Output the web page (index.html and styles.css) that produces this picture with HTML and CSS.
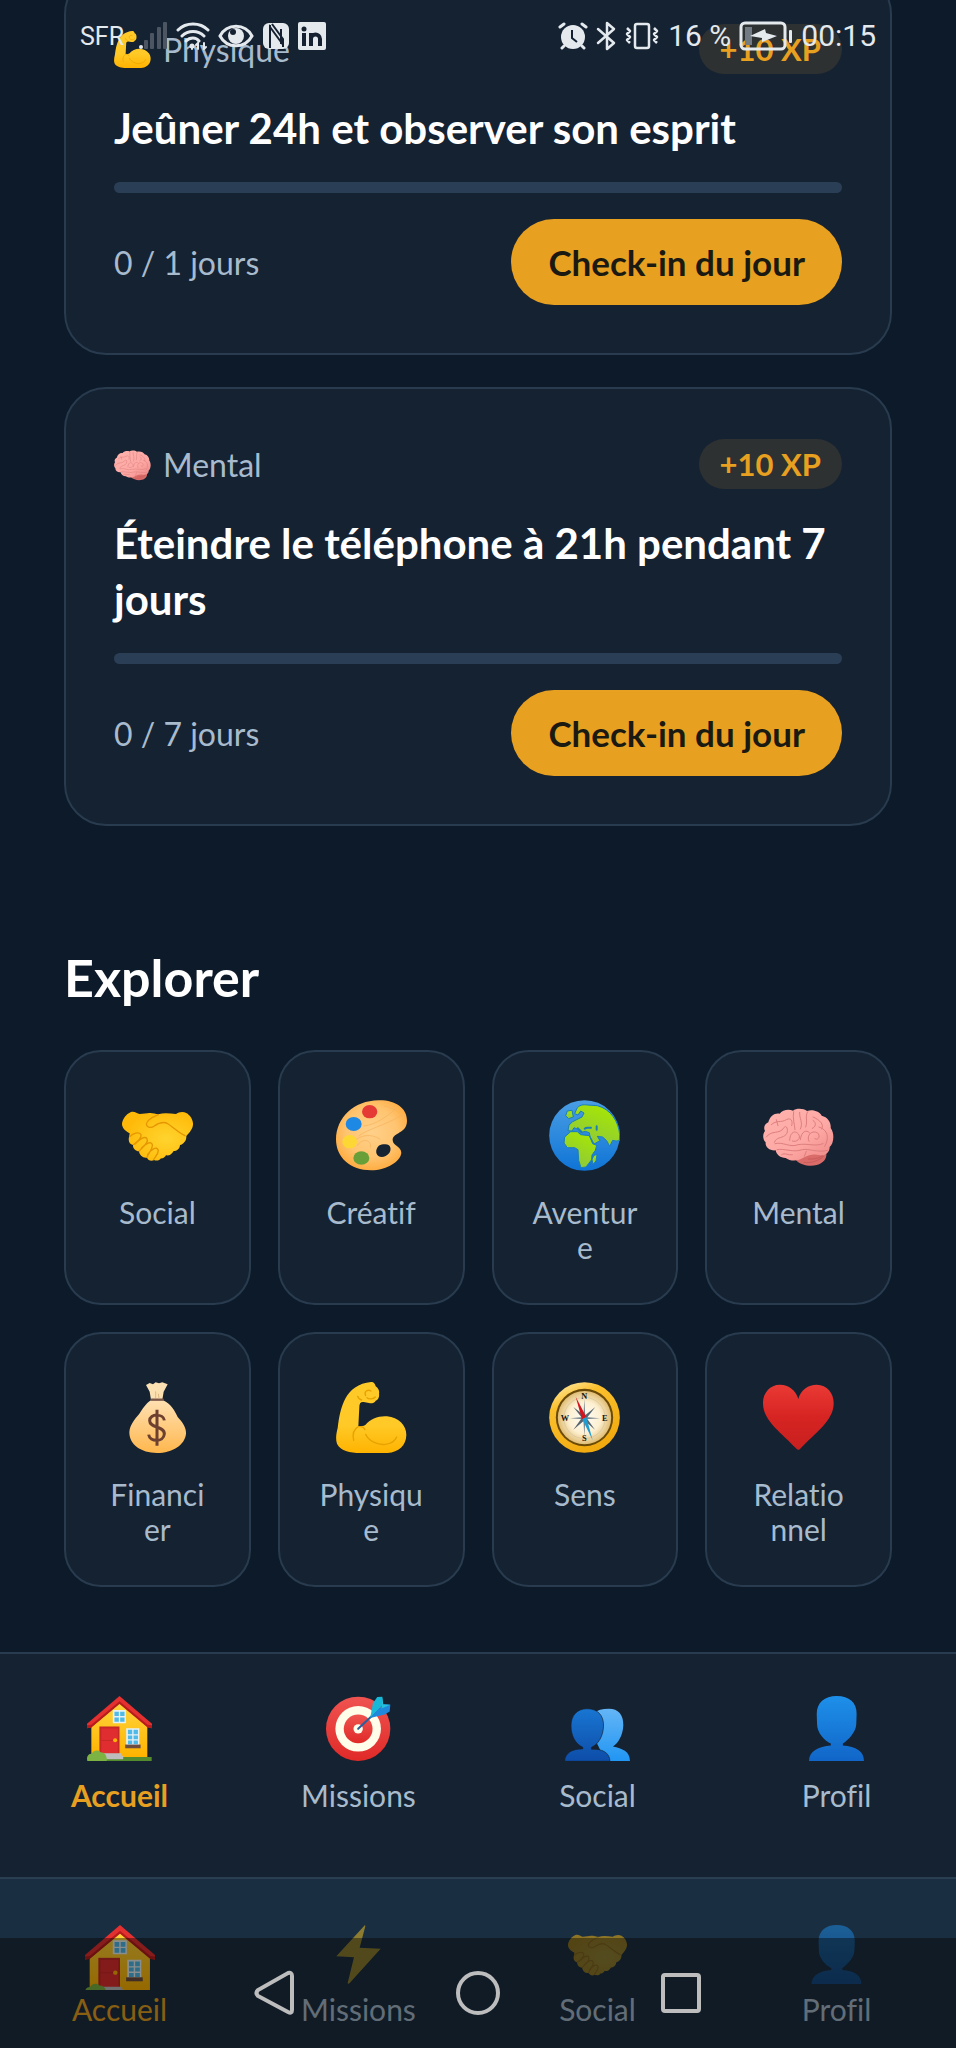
FILE: index.html
```html
<!DOCTYPE html>
<html lang="fr">
<head>
<meta charset="utf-8">
<meta name="viewport" content="width=device-width, initial-scale=1">
<title>Accueil</title>
<link rel="stylesheet" href="styles.css">
</head>
<body>
<svg class="sprite" aria-hidden="true">
  <defs>
    <linearGradient id="gold" x1="0" y1="0" x2="0" y2="1"><stop offset="0" stop-color="#ffca28"/><stop offset=".6" stop-color="#ffca28"/><stop offset="1" stop-color="#ffb300"/></linearGradient>
    <radialGradient id="hands" cx=".62" cy=".55" r=".6"><stop offset="0" stop-color="#ffd42e"/><stop offset="1" stop-color="#ffb908"/></radialGradient>
    <radialGradient id="wood" cx=".5" cy=".45" r=".6"><stop offset="0" stop-color="#ffd08a"/><stop offset=".6" stop-color="#ffc470"/><stop offset="1" stop-color="#ffa838"/></radialGradient>
    <linearGradient id="sea" x1="0" y1="0" x2="0" y2="1"><stop offset="0" stop-color="#4a9ee4"/><stop offset="1" stop-color="#0f74d6"/></linearGradient>
    <linearGradient id="land" x1=".8" y1="0" x2=".3" y2="1"><stop offset="0" stop-color="#a8e800"/><stop offset="1" stop-color="#8cc63f"/></linearGradient>
    <linearGradient id="brainpink" x1="0" y1="0" x2="1" y2="1"><stop offset="0" stop-color="#ffb3ae"/><stop offset=".6" stop-color="#fda8a4"/><stop offset="1" stop-color="#ee8684"/></linearGradient>
    <linearGradient id="bag" x1="0" y1="0" x2="0" y2="1"><stop offset="0" stop-color="#ffe0b2"/><stop offset=".5" stop-color="#ffcc80"/><stop offset="1" stop-color="#ffb74d"/></linearGradient>
    <linearGradient id="ring" x1=".2" y1="0" x2=".7" y2="1"><stop offset="0" stop-color="#ffe9a0"/><stop offset=".25" stop-color="#fbc02d"/><stop offset="1" stop-color="#f0a80c"/></linearGradient>
    <radialGradient id="dial"><stop offset="0" stop-color="#fffdf6"/><stop offset=".6" stop-color="#fdf0d2"/><stop offset="1" stop-color="#e0bd74"/></radialGradient>
    <linearGradient id="love" x1="0" y1="0" x2="0" y2="1"><stop offset="0" stop-color="#ea3a35"/><stop offset=".5" stop-color="#d62422"/><stop offset="1" stop-color="#c8201f"/></linearGradient>
    <linearGradient id="wall" x1="0" y1="0" x2="0" y2="1"><stop offset="0" stop-color="#ffd740"/><stop offset="1" stop-color="#ffb300"/></linearGradient>
    <linearGradient id="disc" x1="0" y1="0" x2="0" y2="1"><stop offset="0" stop-color="#ef5350"/><stop offset="1" stop-color="#e02a28"/></linearGradient>
    <linearGradient id="head" x1="0" y1="0" x2="0" y2="1"><stop offset="0" stop-color="#1e90ea"/><stop offset="1" stop-color="#1166c8"/></linearGradient>
    <linearGradient id="headdark" x1="0" y1="0" x2="0" y2="1"><stop offset="0" stop-color="#1876d2"/><stop offset="1" stop-color="#0d4da8"/></linearGradient>
    <linearGradient id="headlight" x1="0" y1="0" x2="0" y2="1"><stop offset="0" stop-color="#64b5f6"/><stop offset="1" stop-color="#2196f3"/></linearGradient>
  </defs>

  <symbol id="handshake" viewBox="213 480 213 213">
    <path fill="url(#hands)" d="M213 552C214 538 225 522 240 516C250 513 258 520 266 522L290 520C300 517 312 521 322 523C340 517 357 521 375 522C383 516 396 513 406 519C418 526 427 540 426 554C425 567 415 578 406 588C407 601 398 612 387 615C386 627 377 633 368 633C363 642 355 648 345 646C340 654 333 656 330 655C325 663 315 663 309 660C300 665 291 660 288 653C276 655 265 646 264 634C254 634 245 625 246 615C236 613 231 603 234 592L236 580C224 574 213 564 213 552Z"/>
    <g fill="none" stroke="#e59600" stroke-width="4" stroke-linecap="round"><path d="M322 524C308 530 288 538 286 552C288 565 302 564 310 558C325 547 338 546 347 549C365 560 385 580 402 587"/><path d="M236 590C246 580 264 574 270 584C273 595 258 606 247 614M252 612C264 600 280 586 288 596C294 608 276 620 265 633M272 624C285 610 300 602 304 614C306 626 292 640 288 652M290 643C300 630 316 616 322 631C322 645 310 653 308 659"/></g>
  </symbol>

  <symbol id="palette" viewBox="857 482 213 213">
    <path fill="url(#wood)" fill-rule="evenodd" d="M985 483C1035 482 1070 506 1070 544C1070 584 1026 578 1027 603C1028 620 1053 622 1053 641C1050 666 1010 693 962 693C900 693 857 655 857 600C858 535 910 484 985 483ZM1000 615C985 614 976 628 978 641C981 653 995 656 1006 650C1020 644 1024 629 1018 620C1014 615 1008 615 1000 615Z"/>
    <g fill="none" stroke="#f5b45c" stroke-width="3" opacity=".7"><path d="M925 590C950 570 1000 560 1060 525M920 620C935 595 965 600 960 625M990 600C960 580 930 590 915 602M1000 500C1030 505 1048 518 1058 532M940 560C980 555 1010 530 1035 510"/></g>
    <ellipse cx="958" cy="517" rx="23" ry="20" fill="#e53935"/><ellipse cx="910" cy="554" rx="24" ry="21" fill="#1e88e5"/><ellipse cx="898" cy="607" rx="22" ry="20" fill="#fdd835"/><ellipse cx="933" cy="656" rx="24" ry="20" fill="#689f38"/>
  </symbol>

  <symbol id="globe" viewBox="207 181 213 213">
    <circle cx="313.500" cy="287.500" r="106" fill="url(#sea)"/>
    <g fill="url(#land)" stroke="#1b7fb8" stroke-width="3" stroke-linejoin="round"><path d="M290 208C296 196 310 194 322 196L352 198C392 208 416 246 419 285L418 303L408 304L398 302L389 320L380 303L368 292L352 290L360 303L342 313L330 290L328 279L316 275L302 279L296 270L282 264L276 274L264 273L267 256L278 246L290 240L306 232L312 220L302 214L294 226L284 222Z"/><path d="M272 276L292 276L302 285L328 288L338 312L350 317L346 332L336 346L335 360L318 382L303 384L296 362L294 330L284 324L262 324L252 310L254 292Z"/><path d="M341 348L351 344L348 364L339 374L336 360Z"/><path d="M262 214L276 212L280 232L266 237L257 228Z"/></g>
    <path fill="none" stroke="#1b7fb8" stroke-width="6" stroke-linecap="round" d="M314 267C320 262 326 266 333 264M350 260V270M293 266L305 277"/>
  </symbol>

  <symbol id="brain" viewBox="850 181 213 213">
    <path fill="#d96b69" d="M948 360C965 380 1005 384 1025 370C1040 362 1043 345 1038 335L960 340Z"/>
    <path fill="url(#brainpink)" d="M866 248C870 228 888 218 900 222C908 210 928 208 940 213C950 205 972 206 982 214C1000 208 1020 216 1026 228C1045 232 1055 250 1053 265C1066 282 1062 312 1050 322C1050 340 1035 350 1018 346C1000 342 985 346 968 356C952 366 930 364 918 355C902 355 890 345 888 332C870 334 856 322 858 308C847 298 850 280 856 274C850 262 856 252 866 248Z"/>
    <g fill="none" stroke="#dd7f7e" stroke-width="3" stroke-linecap="round"><path d="M875 255C890 240 905 250 920 240C935 232 940 245 936 258M942 216C938 235 945 255 946 270M960 218C958 236 972 250 962 268M984 216C975 230 985 245 978 262M860 292C875 270 900 285 912 265C922 250 930 280 915 288C905 296 890 292 884 308M930 302C930 280 945 270 955 282C968 295 950 310 938 304M962 300C965 275 980 268 990 280M988 305C978 285 1000 270 1014 280C1025 292 1012 305 1005 296M1000 232C1020 240 1035 255 1026 268M1018 262C1045 270 1050 295 1035 320M886 312C910 305 930 325 955 315C985 310 1005 322 1030 312M892 330C915 325 940 340 968 330C990 326 1010 340 1045 332M906 345C916 338 926 348 938 345M980 335L974 350M890 240L895 258M1000 242C1012 250 1008 262 998 266"/></g>
    <path fill="none" stroke="#b94f4f" stroke-width="3" opacity=".5" d="M972 368C995 372 1018 362 1032 350M985 358C1005 360 1020 354 1030 348"/>
  </symbol>

  <symbol id="moneybag" viewBox="213 187 213 213">
    <path fill="#fbe0b2" d="M285 196L296 190L306 194L314 188L324 191L334 188L350 194L338 216L334 240H300L296 216Z"/>
    <path fill="url(#bag)" d="M300 242H336C360 252 372 275 380 292C395 308 406 324 405 342C402 375 365 400 318 400C270 400 235 375 235 338C236 318 250 300 264 284C275 268 284 252 300 242Z"/>
    <path stroke="#795548" stroke-width="7" stroke-linecap="round" d="M302 240H335"/><path fill="none" stroke="#e0b880" stroke-width="3" d="M314 215V235M322 222L324 236"/>
    <path fill="none" stroke="#6d4030" stroke-width="9" d="M340 302C338 282 296 280 296 303C296 326 341 318 340 343C338 369 296 367 293 345M318 270V378"/>
  </symbol>

  <symbol id="arm" viewBox="857 187 213 213">
    <path fill="url(#gold)" d="M962 187C970 186 974 192 976 200C984 205 988 214 986 222C988 232 983 240 976 243C972 251 962 252 956 250L940 247C930 246 927 252 927 262L924 320C932 320 940 319 945 316C960 298 985 288 1010 290C1045 293 1069 318 1068 347C1067 378 1045 398 1012 400H930C900 400 868 392 860 372C855 358 858 340 862 325C866 292 872 260 886 235C898 212 925 190 962 187Z"/>
    <g fill="none" stroke="#e8a200" stroke-width="4" stroke-linecap="round"><path d="M946 228C940 216 952 208 962 214M950 234C956 240 970 238 975 232M922 230C924 236 928 240 934 241M924 321C908 330 906 345 910 362M928 321C935 320 942 325 944 330M946 344C955 366 985 377 1005 374C1022 372 1034 364 1039 352"/></g>
  </symbol>

  <symbol id="compass" viewBox="207 187 213 213">
    <circle cx="313.500" cy="293.500" r="106" fill="url(#ring)"/><circle cx="313.500" cy="293.500" r="86" fill="#6b4a08"/><circle cx="313.500" cy="294" r="80" fill="url(#dial)"/><circle cx="313.500" cy="295" r="62" fill="none" stroke="#d5c39a" stroke-width="2"/>
    <path fill="#78848c" d="M313 238L316 292L360 296L316 299L313 350L310 299L270 296L310 292Z"/><path fill="#566570" d="M346 262L318 298L310 291ZM280 330L308 291L317 299ZM280 262L309 299L318 291ZM345 330L317 291L309 299Z"/>
    <path fill="#d3131d" d="M287 231L319 292L306 299Z"/><path fill="#1e9cd2" d="M338 362L307 299L319 292Z"/>
    <g font-family="Liberation Serif, serif" font-weight="700" font-size="25" text-anchor="middle" fill="#17130b"><text x="313" y="239">N</text><text x="313" y="364">S</text><text x="255" y="305">W</text><text x="374" y="305">E</text></g>
  </symbol>

  <symbol id="heart" viewBox="849 187 213 213">
    <path fill="url(#love)" d="M955 238C962 210 985 195 1010 195C1042 195 1062 222 1061 252C1060 305 1002 342 962 386Q955 395 948 386C908 342 850 305 849 252C848 222 868 195 900 195C926 195 948 212 955 238Z"/>
  </symbol>

  <symbol id="house" viewBox="263 168 194 194">
    <path fill="#558b2f" d="M300 350H456V362H300Z"/><path fill="url(#wall)" d="M276 250L360 180L443 250V350H276Z"/>
    <path fill="#e53030" d="M360 168L457 251V264L444 261L360 189L276 261L263 264V251Z"/><path fill="#b71c1c" d="M263 255L276 254L360 184L444 254L457 255V264L444 262L360 192L276 262L263 264Z"/>
    <path fill="#c62828" d="M300 259H360V340H300Z"/><path fill="#e02e30" d="M306 265H355V340H306Z"/><path fill="#c62828" d="M306 299H340V302H306Z"/><circle cx="347" cy="300" r="6" fill="#ffb300"/>
    <path fill="#e8f2f4" d="M340 210H379V249H340ZM380 264H419V314H380Z"/><path fill="#4fb9e8" d="M345 215H358V228H345ZM362 215H375V228H362ZM345 232H358V245H345ZM362 232H375V245H362ZM385 269H398V282H385ZM402 269H415V282H402ZM385 286H398V297H385ZM402 286H415V297H402ZM385 301H398V312H385ZM402 301H415V312H402Z"/>
    <path fill="#6d4c41" d="M377 313H423V324H377Z"/><path fill="#bdbdbd" d="M312 339H366V346H371V357H312Z"/><path fill="#7cb342" d="M264 362C261 350 265 340 277 340C283 329 297 328 303 336C315 335 323 346 322 360V362Z"/>
  </symbol>

  <symbol id="target" viewBox="980 168 194 194">
    <circle cx="1076" cy="266" r="96" fill="url(#disc)"/><circle cx="1076" cy="266" r="68" fill="#fffde9"/><circle cx="1076" cy="266" r="43" fill="url(#disc)"/><circle cx="1076" cy="266" r="14" fill="#fffde9"/>
    <path stroke="#285f9e" stroke-width="6" stroke-linecap="round" d="M1076 266L1140 206"/><path fill="#18b8d8" d="M1112 234L1120 190L1133 171L1148 170L1150 194Z"/><path fill="#1e88dc" d="M1112 234L1142 202L1152 192L1172 194L1170 214L1155 223Z"/><path fill="#24c0dc" d="M1148 170L1151 193L1172 194L1146 205Z"/>
  </symbol>

  <symbol id="people" viewBox="269 168 194 194">
    <path fill="url(#headlight)" d="M400 206C428 206 444 224 443 255C442 285 428 308 412 319C440 325 462 333 463 362H390L360 300L355 220C365 210 380 206 400 206Z"/>
    <path stroke="#152131" stroke-width="2" fill="url(#headdark)" d="M335 206C366 206 385 225 384 258C383 287 369 312 348 321V327C378 325 403 336 403 363H268C268 339 290 325 322 326V321C300 311 287 287 287 257C287 226 305 206 335 206Z"/>
  </symbol>

  <symbol id="person" viewBox="985 168 194 194">
    <path fill="url(#head)" d="M1083 168C1120 168 1143 188 1142 222L1141 252C1140 277 1116 299 1101 310V316C1140 319 1164 333 1164 362H1000C1000 333 1028 319 1065 316V310C1045 300 1024 277 1024 252L1023 222C1023 188 1046 168 1083 168Z"/>
  </symbol>

  <symbol id="bolt" viewBox="990 855 177 177">
    <path fill="#fbc922" d="M1098 855L1012 949L1065 952L1046 1029Q1047 1034 1052 1029L1145 926L1082 923L1099 859Z"/>
  </symbol>
</svg>

<div class="statusbar">
  <div class="status-group">
    <span class="carrier">SFR</span>
    <svg class="signal" viewBox="0 0 30 28" aria-hidden="true"><circle cx="3" cy="25" r="2" fill="#e4e9ee"/><g fill="#4c5662"><rect x="6" y="18" width="4" height="9" rx="1"/><rect x="12" y="11" width="4" height="16" rx="1"/><rect x="19" y="5" width="4" height="22" rx="1"/><rect x="25" y="0" width="4" height="27" rx="1"/></g></svg>
    <svg class="wifi" viewBox="0 0 34 28" fill="none" stroke="#e4e9ee" stroke-width="3" stroke-linecap="round" aria-hidden="true"><path d="M2 8C10 0 24 0 32 8M6 14C12 8 22 8 28 14M10 19C14 15 20 15 23 19"/><path stroke-width="2" d="M16 24V27M22 27V21L20 23M28 21V27L30 25"/><circle cx="16" cy="24" r="1"/></svg>
    <svg class="eye" viewBox="0 0 36 24" fill="none" stroke="#e4e9ee" stroke-width="3" aria-hidden="true"><path d="M2 12C9 -1 27 -1 34 12C27 25 9 25 2 12Z"/><circle cx="18" cy="12" r="8" fill="#e4e9ee" stroke="none"/><circle cx="15" cy="8" r="3" fill="#152131" stroke="none"/></svg>
    <svg class="nfc" viewBox="0 0 28 28" aria-hidden="true"><rect x="1" y="1" width="26" height="26" rx="6" fill="#e4e9ee"/><path fill="none" stroke="#152131" stroke-width="2" d="M8 26V5L19 20V7M10 2L21 17V25M8 5V3M19 20V22"/></svg>
    <svg class="linkedin" viewBox="0 0 28 28" aria-hidden="true"><rect width="28" height="28" rx="2" fill="#e4e9ee"/><circle cx="6" cy="7" r="2.500" fill="#152131"/><path fill="none" stroke="#152131" stroke-width="4" d="M6 11V24M13 11V24M13 17C13 11 22 11 22 17V24"/></svg>
  </div>
  <div class="status-group">
    <svg class="alarm" viewBox="0 0 30 28" aria-hidden="true"><circle cx="15" cy="15" r="12" fill="#e4e9ee"/><path fill="none" stroke="#e4e9ee" stroke-width="3" stroke-linecap="round" d="M2 5L6 2M28 5L24 2M6 24L4 26M24 24L26 26"/><path fill="none" stroke="#152131" stroke-width="2" d="M14 8V16L19 20"/></svg>
    <svg class="bluetooth" viewBox="0 0 20 30" fill="none" stroke="#e4e9ee" stroke-width="2.500" stroke-linejoin="round" stroke-linecap="round" aria-hidden="true"><path d="M2 8L18 22L11 28V2L18 8L2 22"/></svg>
    <svg class="vibrate" viewBox="0 0 36 28" fill="none" stroke="#e4e9ee" stroke-width="2.500" stroke-linejoin="round" aria-hidden="true"><rect x="11" y="2" width="14" height="24" rx="2"/><path d="M3 6L6 9L3 12L6 15L3 18L6 21M30 6L33 9L30 12L33 15L30 18L33 21"/></svg>
    <span class="charge">16 %</span>
    <svg class="battery" viewBox="0 0 54 30" aria-hidden="true"><rect x="6" y="6" width="7" height="18" fill="#727a83"/><rect x="2" y="2" width="44" height="26" rx="4" fill="none" stroke="#e4e9ee" stroke-width="3"/><path fill="#e4e9ee" d="M11 15L26 8L27 12L38 15L23 21V17Z"/><rect x="50" y="9" width="3" height="13" rx="1" fill="#e4e9ee"/></svg>
    <span class="clock">00:15</span>
  </div>
</div>

<main class="content">
  <section class="missions">
    <article class="card">
      <div class="card-head">
        <span class="category"><svg class="category-icon" aria-hidden="true"><use href="#arm"/></svg>Physique</span>
        <span class="xp">+10 XP</span>
      </div>
      <h3 class="card-title">Jeûner 24h et observer son esprit</h3>
      <progress class="progress" value="0" max="1" aria-label="Progression"></progress>
      <div class="card-foot"><span>0 / 1 jours</span><button class="checkin" type="button">Check-in du jour</button></div>
    </article>
    <article class="card">
      <div class="card-head">
        <span class="category"><svg class="category-icon" aria-hidden="true"><use href="#brain"/></svg>Mental</span>
        <span class="xp">+10 XP</span>
      </div>
      <h3 class="card-title">Éteindre le téléphone à 21h pendant 7 jours</h3>
      <progress class="progress" value="0" max="7" aria-label="Progression"></progress>
      <div class="card-foot"><span>0 / 7 jours</span><button class="checkin" type="button">Check-in du jour</button></div>
    </article>
  </section>

  <section class="explore">
    <h2 class="section-title">Explorer</h2>
    <div class="grid">
      <button class="tile" type="button"><svg class="tile-icon" aria-hidden="true"><use href="#handshake"/></svg><span class="tile-label">Social</span></button>
      <button class="tile" type="button"><svg class="tile-icon" aria-hidden="true"><use href="#palette"/></svg><span class="tile-label">Créatif</span></button>
      <button class="tile" type="button"><svg class="tile-icon" aria-hidden="true"><use href="#globe"/></svg><span class="tile-label">Aventure</span></button>
      <button class="tile" type="button"><svg class="tile-icon" aria-hidden="true"><use href="#brain"/></svg><span class="tile-label">Mental</span></button>
      <button class="tile" type="button"><svg class="tile-icon" aria-hidden="true"><use href="#moneybag"/></svg><span class="tile-label">Financier</span></button>
      <button class="tile" type="button"><svg class="tile-icon" aria-hidden="true"><use href="#arm"/></svg><span class="tile-label">Physique</span></button>
      <button class="tile" type="button"><svg class="tile-icon" aria-hidden="true"><use href="#compass"/></svg><span class="tile-label">Sens</span></button>
      <button class="tile" type="button"><svg class="tile-icon" aria-hidden="true"><use href="#heart"/></svg><span class="tile-label">Relationnel</span></button>
    </div>
  </section>
</main>

<nav class="tabs" aria-label="Navigation">
  <a class="tab tab-active" href="#"><svg class="tab-icon" aria-hidden="true"><use href="#house"/></svg>Accueil</a>
  <a class="tab" href="#"><svg class="tab-icon" aria-hidden="true"><use href="#target"/></svg>Missions</a>
  <a class="tab" href="#"><svg class="tab-icon" aria-hidden="true"><use href="#people"/></svg>Social</a>
  <a class="tab" href="#"><svg class="tab-icon" aria-hidden="true"><use href="#person"/></svg>Profil</a>
</nav>

<div class="dock">
  <nav class="tabs tabs-lower" aria-label="Onglets">
    <a class="tab tab-active" href="#"><span class="tab-slot"><svg class="lower-icon lower-icon-active" aria-hidden="true"><use href="#house"/></svg></span>Accueil</a>
    <a class="tab" href="#"><span class="tab-slot"><svg class="lower-icon" aria-hidden="true"><use href="#bolt"/></svg></span>Missions</a>
    <a class="tab" href="#"><span class="tab-slot"><svg class="lower-icon" aria-hidden="true"><use href="#handshake"/></svg></span>Social</a>
    <a class="tab" href="#"><span class="tab-slot"><svg class="lower-icon" aria-hidden="true"><use href="#person"/></svg></span>Profil</a>
  </nav>
  <div class="system-keys">
    <button class="key" type="button" aria-label="Retour"><svg class="key-icon" viewBox="0 0 46 46"><path d="M36 3Q40 2 40 6V40Q40 44 36 42L6 26Q3 23 6 20Z"/></svg></button>
    <button class="key" type="button" aria-label="Écran d’accueil"><svg class="key-icon" viewBox="0 0 46 46"><circle cx="23" cy="23" r="20"/></svg></button>
    <button class="key" type="button" aria-label="Applications récentes"><svg class="key-icon" viewBox="0 0 46 46"><rect x="5" y="5" width="36" height="36" rx="2"/></svg></button>
  </div>
</div>
</body>
</html>
```
FILE: styles.css
```css
* { box-sizing: border-box; }

:root {
  --bg: #0d1a29;
  --surface: #152232;
  --line: #293b4f;
  --muted: #a8bbcd;
  --accent: #e8a020;
}

body {
  margin: 0;
  position: relative;
  background: var(--bg);
  color: #fff;
  font-family: Lato, "Open Sans", sans-serif;
  font-variant-ligatures: none;
  overflow-x: hidden;
}

button { font: inherit; color: inherit; cursor: pointer; }
h2, h3 { margin: 0; font-weight: 700; }
.sprite { position: absolute; width: 0; height: 0; }

/* System status bar, laid over the scrolled content */
.statusbar {
  position: absolute;
  top: 20px;
  left: 0;
  right: 0;
  z-index: 2;
  display: flex;
  justify-content: space-between;
  padding: 0 80px;
  color: #e4e9ee;
  font-family: Roboto, sans-serif;
}
.status-group { display: flex; align-items: center; gap: 8px; height: 32px; }
.carrier { font-size: 25px; line-height: 32px; padding-top: 2px; margin-right: 6px; }
.charge, .clock { font-size: 30px; line-height: 32px; }
.signal { width: 30px; height: 28px; }
.wifi { width: 34px; height: 28px; }
.eye { width: 36px; height: 24px; }
.nfc, .linkedin { width: 28px; height: 28px; }
.alarm { width: 30px; height: 28px; }
.bluetooth { width: 20px; height: 30px; }
.vibrate { width: 36px; height: 28px; }
.battery { width: 54px; height: 30px; }

/* The list is scrolled: its first card starts above the window */
.content { margin-top: -28px; padding: 0 64px 65px; }
.missions { display: flex; flex-direction: column; gap: 32px; }

.card {
  padding: 50px 48px 48px;
  background: var(--surface);
  border: 2px solid var(--line);
  border-radius: 42px;
}
.card-head, .card-foot { display: flex; align-items: center; justify-content: space-between; color: var(--muted); font-size: 32px; }
.card-head { height: 50px; }
.category { display: flex; align-items: center; gap: 12px; }
.category-icon { width: 37px; height: 37px; }
.xp {
  padding: 0 21px;
  border-radius: 25px;
  background: #2d3132;
  color: var(--accent);
  font-size: 31px;
  font-weight: 700;
  line-height: 50px;
}
.card-title { margin: 26px 0; font-size: 42px; line-height: 56px; }
.progress {
  display: block;
  width: 100%;
  height: 11px;
  appearance: none;
  border: 0;
  border-radius: 6px;
  background: #2a3e56;
  overflow: hidden;
}
.progress::-webkit-progress-bar { background: #2a3e56; }
.progress::-webkit-progress-value { background: var(--accent); }
.card-foot { margin-top: 26px; }
.checkin {
  height: 86px;
  padding: 0 37px;
  border: 0;
  border-radius: 43px;
  background: var(--accent);
  color: #1a1a12;
  font-size: 35px;
  font-weight: 700;
}

.explore { margin-top: 121px; }
.section-title { font-size: 52px; line-height: 60px; }
.grid { display: grid; grid-template-columns: repeat(4, minmax(0, 1fr)); gap: 27px; margin-top: 43px; }
.tile {
  display: flex;
  flex-direction: column;
  align-items: center;
  gap: 24px;
  min-height: 255px;
  padding: 48px 38px 38px;
  background: var(--surface);
  border: 2px solid var(--line);
  border-radius: 37px;
  color: var(--muted);
}
.tile-icon { width: 71px; height: 71px; flex: none; }
.tile-label { max-width: 100%; font-size: 30px; line-height: 35px; text-align: center; overflow-wrap: anywhere; }

.tabs {
  display: grid;
  grid-template-columns: repeat(4, 1fr);
  padding: 42px 0 64px;
  background: var(--surface);
  border-top: 2px solid var(--line);
}
.tab {
  display: flex;
  flex-direction: column;
  align-items: center;
  gap: 17px;
  color: var(--muted);
  font-size: 30px;
  line-height: 35px;
  text-decoration: none;
}
.tab-active { color: var(--accent); font-weight: 700; }
.tab-icon { width: 65px; height: 65px; }

/* Second tab bar, dimmed by the system keys */
.dock { position: relative; }
.tabs-lower { padding: 46px 0 21px; background: #1a2e42; border-top-color: #2a3e52; }
.tabs-lower .tab { gap: 2px; font-weight: 400; }
.tab-slot { height: 65px; overflow: hidden; }
.lower-icon { display: block; width: 59px; height: 59px; opacity: 0.5; }
.lower-icon-active { width: 70px; height: 70px; opacity: 1; }
.system-keys {
  position: absolute;
  inset: auto 0 0;
  height: 110px;
  display: flex;
  align-items: center;
  justify-content: center;
  gap: 157px;
  background: rgba(3, 2, 0, 0.42);
}
.key { padding: 0; border: 0; background: none; }
.key-icon { display: block; width: 46px; height: 46px; fill: none; stroke: #bdbdbd; stroke-width: 4; }
```
